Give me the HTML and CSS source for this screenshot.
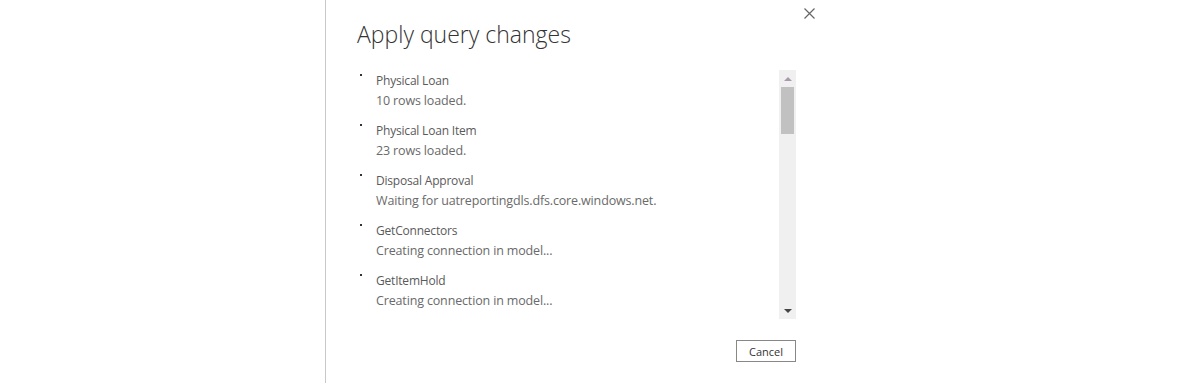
FILE: index.html
```html
<!DOCTYPE html>
<html lang="en">
<head>
<meta charset="UTF-8">
<meta name="viewport" content="width=device-width, initial-scale=1.0">
<title>Apply query changes</title>
<link rel="stylesheet" href="styles.css">
</head>
<body>

<div class="page">
  <div class="side"></div>

  <div class="dialog">
    <div class="dialog_body">
      <h1>Apply query changes</h1>

      <div class="list_box">
        <ul class="query_list">
          <li>
            <span class="bullet"></span>
            <div>
              <p class="query_name">Physical Loan</p>
              <p class="query_status">10 rows loaded.</p>
            </div>
          </li>
          <li>
            <span class="bullet"></span>
            <div>
              <p class="query_name">Physical Loan Item</p>
              <p class="query_status">23 rows loaded.</p>
            </div>
          </li>
          <li>
            <span class="bullet"></span>
            <div>
              <p class="query_name">Disposal Approval</p>
              <p class="query_status">Waiting for uatreportingdls.dfs.core.windows.net.</p>
            </div>
          </li>
          <li>
            <span class="bullet"></span>
            <div>
              <p class="query_name">GetConnectors</p>
              <p class="query_status">Creating connection in model...</p>
            </div>
          </li>
          <li>
            <span class="bullet"></span>
            <div>
              <p class="query_name">GetItemHold</p>
              <p class="query_status">Creating connection in model...</p>
            </div>
          </li>
        </ul>

        <div class="scrollbar">
          <span class="arrow up"></span>
          <div class="track">
            <div class="thumb"></div>
          </div>
          <span class="arrow down"></span>
        </div>
      </div>

      <div class="buttons">
        <button class="cancel">Cancel</button>
      </div>
    </div>

    <button class="close" aria-label="Close">
      <svg width="11" height="11" viewBox="0 0 11 11">
        <path d="M0.5 0.5 L10.5 10.5 M10.5 0.5 L0.5 10.5" stroke="#666" stroke-width="1.2" fill="none"/>
      </svg>
    </button>
  </div>
</div>

</body>
</html>
```

FILE: styles.css
```css
body {
  font-family: "Open Sans", "Noto Sans", Arial, sans-serif;
  margin: 0;
  background: #fff;
}
.page {
  display: flex;
  height: 385px;
}
.side {
  width: 325px;
}
.dialog {
  position: relative;
  height: 383px;
  width: 500px;
  border-left: 1px solid #c8c8c8;
}
.dialog_body {
  padding-left: 31px;
  width: 439px;
}
h1 {
  margin: 0;
  padding-top: 19px;
  height: 70px;
  box-sizing: border-box;
  font-size: 23px;
  font-weight: 300;
  color: #333;
  line-height: 30px;
}
.list_box {
  display: flex;
  height: 249px;
}
.query_list {
  list-style: none;
  margin: 0;
  padding: 0 0 0 3px;
  flex: 1;
  overflow: hidden;
}
.query_list li {
  display: flex;
  height: 50px;
  padding-top: 1px;
  box-sizing: border-box;
}
.bullet {
  width: 2px;
  height: 2px;
  background: #333;
  margin: 3px 14px 0 0;
  flex-shrink: 0;
}
.query_list p {
  margin: 0;
  line-height: 20px;
  white-space: nowrap;
}
.query_name {
  font-size: 12px;
  letter-spacing: -0.2px;
  color: #5a5a5a;
}
.query_status {
  font-size: 12.5px;
  letter-spacing: -0.15px;
  color: #6a6a6a;
}
.scrollbar {
  width: 17px;
  background: #f0f0f0;
  display: flex;
  flex-direction: column;
  align-items: center;
}
.arrow {
  height: 17px;
  width: 17px;
  display: flex;
  align-items: center;
  justify-content: center;
}
.arrow.up::before {
  content: "";
  border-left: 4px solid transparent;
  border-right: 4px solid transparent;
  border-bottom: 4px solid #a89aaa;
}
.arrow.down::before {
  content: "";
  border-left: 4px solid transparent;
  border-right: 4px solid transparent;
  border-top: 4px solid #444;
}
.track {
  flex: 1;
  width: 13px;
}
.thumb {
  height: 47px;
  background: #c1c1c1;
}
.buttons {
  display: flex;
  justify-content: flex-end;
  margin-top: 21px;
}
.cancel {
  width: 60px;
  height: 22px;
  border: 1px solid #8a8886;
  background: #fff;
  font-family: inherit;
  font-size: 11px;
  color: #333;
  padding: 0;
}
.close {
  position: absolute;
  top: 8px;
  left: 478px;
  border: none;
  background: none;
  padding: 0;
  width: 11px;
  height: 11px;
  line-height: 0;
}
```
